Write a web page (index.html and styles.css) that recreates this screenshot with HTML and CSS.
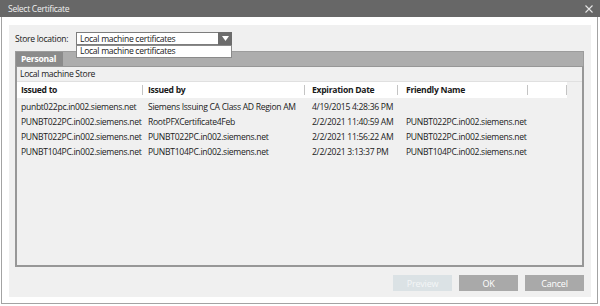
FILE: index.html
```html
<!DOCTYPE html>
<html lang="en">
<head>
    <meta charset="UTF-8">
    <title>Select Certificate</title>
    <link rel="stylesheet" href="styles.css">
</head>
<body>
    <div class="titlebar">
        <span class="title">Select Certificate</span>
        <svg class="close" width="8" height="8" viewBox="0 0 8 8"><path d="M0.5 0.5 L7.5 7.5 M7.5 0.5 L0.5 7.5" stroke="#e6e6e6" stroke-width="1.1"/></svg>
    </div>
    <div class="frame">
        <div class="panel">
            <div class="store-row">
                <label>Store location:</label>
                <div class="select">
                    <span class="select-value">Local machine certificates</span>
                    <span class="select-arrow"><svg width="7" height="5" viewBox="0 0 7 5"><path d="M0 0 L7 0 L3.5 5 Z" fill="#fff"/></svg></span>
                    <div class="select-list">Local machine certificates</div>
                </div>
            </div>
            <div class="tabbar">
                <div class="tab">Personal</div>
            </div>
            <div class="listbox">
                <div class="store-name">Local machine Store</div>
                <div class="grid-row head">
                    <div class="c1">Issued to</div>
                    <div class="c2">Issued by</div>
                    <div class="c3">Expiration Date</div>
                    <div class="c4">Friendly Name</div>
                    <div class="c5"></div>
                    <div class="c6"></div>
                </div>
                <div class="rows">
                    <div class="grid-row">
                        <div class="c1">punbt022pc.in002.siemens.net</div>
                        <div class="c2">Siemens Issuing CA Class AD Region AM</div>
                        <div class="c3">4/19/2015 4:28:36 PM</div>
                        <div class="c4"></div>
                    </div>
                    <div class="grid-row">
                        <div class="c1">PUNBT022PC.in002.siemens.net</div>
                        <div class="c2">RootPFXCertificate4Feb</div>
                        <div class="c3">2/2/2021 11:40:59 AM</div>
                        <div class="c4">PUNBT022PC.in002.siemens.net</div>
                    </div>
                    <div class="grid-row">
                        <div class="c1">PUNBT022PC.in002.siemens.net</div>
                        <div class="c2">PUNBT022PC.in002.siemens.net</div>
                        <div class="c3">2/2/2021 11:56:22 AM</div>
                        <div class="c4">PUNBT022PC.in002.siemens.net</div>
                    </div>
                    <div class="grid-row">
                        <div class="c1">PUNBT104PC.in002.siemens.net</div>
                        <div class="c2">PUNBT104PC.in002.siemens.net</div>
                        <div class="c3">2/2/2021 3:13:37 PM</div>
                        <div class="c4">PUNBT104PC.in002.siemens.net</div>
                    </div>
                </div>
            </div>
            <div class="buttons">
                <button class="btn btn-disabled">Preview</button>
                <button class="btn">OK</button>
                <button class="btn">Cancel</button>
            </div>
        </div>
    </div>
</body>
</html>
```

FILE: styles.css
```css
* {
    box-sizing: border-box;
}
body {
    margin: 0;
    font-family: "Open Sans", "Noto Sans", sans-serif;
    font-size: 8.6px;
    letter-spacing: -0.3px;
    color: #1a1a1a;
    background: #fff;
    width: 600px;
    height: 306px;
    overflow: hidden;
}
.titlebar {
    height: 17px;
    background: #676767;
    display: flex;
    align-items: center;
    justify-content: space-between;
    padding: 0 7px 0 8px;
}
.titlebar .title {
    color: #f0f0f0;
}
.close {
    display: block;
}
.frame {
    margin-left: 1px;
    width: 597px;
    height: 287px;
    border: 1px solid #a3a3a3;
    border-top: none;
    padding: 8px 6px 0 7px;
}
.panel {
    background: #f0f0f0;
    height: 272px;
    padding: 7px 7px 0 6px;
    display: flex;
    flex-direction: column;
}
.store-row {
    display: flex;
    align-items: center;
    height: 13px;
}
.store-row label {
    width: 61px;
}
.select {
    position: relative;
    width: 156px;
    height: 13px;
    border: 1px solid #7d7d7d;
    border-right: none;
    background: #fff;
    display: flex;
    align-items: center;
}
.select-value {
    flex: 1;
    padding-left: 3px;
}
.select-arrow {
    width: 14px;
    height: 13px;
    margin: -1px 0;
    background: #6c6c6c;
    display: flex;
    align-items: center;
    justify-content: center;
}
.select-arrow svg {
    display: block;
}
.select-list {
    position: absolute;
    left: -1px;
    top: 12px;
    width: 156px;
    height: 13px;
    line-height: 11px;
    padding-left: 3px;
    background: #fff;
    border: 1px solid #8a8a8a;
    z-index: 2;
}
.tabbar {
    margin-top: 6px;
    height: 15px;
    background: #adadad;
    border: 1px solid #9c9c9c;
    border-bottom: none;
}
.tab {
    display: inline-block;
    width: 47px;
    height: 14px;
    line-height: 14px;
    padding-left: 5px;
    background: #8b8b8b;
    color: #fff;
    font-weight: bold;
}
.listbox {
    height: 201px;
    border: 2px solid #979797;
    border-top: 1px solid #979797;
    background: #f0f0f0;
}
.store-name {
    height: 15px;
    line-height: 14px;
    padding-left: 3px;
    border-bottom: 1px solid #e0e0e0;
}
.grid-row {
    display: grid;
    grid-template-columns: 126px 162px 93px 130px 39px 15px;
    height: 15px;
    line-height: 15px;
    white-space: nowrap;
}
.grid-row > div {
    overflow: hidden;
}
.grid-row.head {
    height: 16px;
    line-height: 16px;
    font-weight: bold;
}
.head > div {
    position: relative;
    background: #fff;
}
.head > div::after {
    content: "";
    position: absolute;
    right: 0;
    top: 3px;
    bottom: 3px;
    width: 1px;
    background: #c4c4c4;
}
.head > .c6 {
    background: transparent;
}
.head > .c6::after {
    display: none;
}
.c1 { padding-left: 4px; }
.c2 { padding-left: 5px; }
.c3 { padding-left: 7px; }
.c4 { padding-left: 8px; }
.rows {
    padding-top: 2px;
}
.buttons {
    margin-top: 8px;
    display: flex;
    justify-content: flex-end;
    gap: 7px;
}
.btn {
    width: 59px;
    height: 16px;
    border: none;
    background: #a9a9a9;
    color: #fff;
    font-family: inherit;
    font-size: 9px;
    letter-spacing: -0.2px;
    padding: 0;
}
.btn-disabled {
    background: #dbe2e5;
    color: #f4f6f7;
}
```
